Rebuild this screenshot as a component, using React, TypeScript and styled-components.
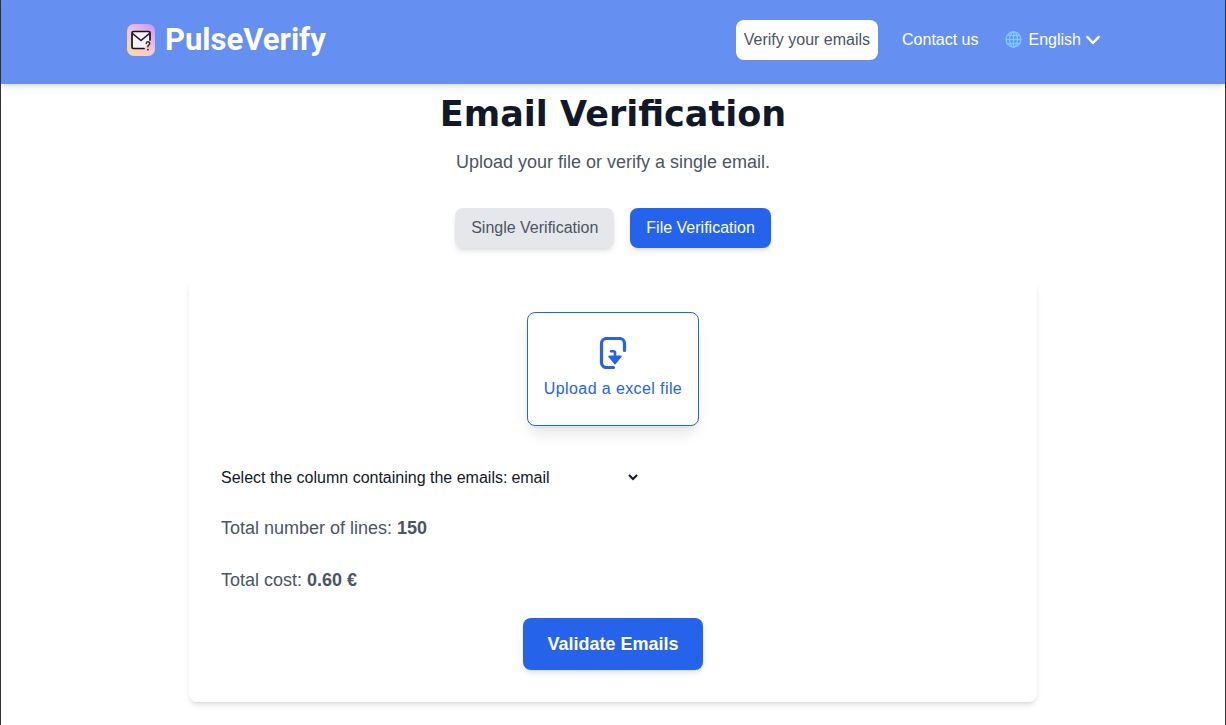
import React, { useState } from "react";
import styled, { createGlobalStyle } from "styled-components";

const GlobalStyle = createGlobalStyle`
  *, *::before, *::after { box-sizing: border-box; }
  body {
    margin: 0;
    background: #ffffff;
    color: #111827;
    font-family: "Liberation Sans", Arial, sans-serif;
    font-size: 16px;
    line-height: 24px;
  }
  h1, p { margin: 0; }
  button, select, input { font: inherit; }
`;

const Page = styled.div`
  min-height: 100vh;
  border: solid #333333;
  border-width: 0 1px;
`;

const Header = styled.header`
  background: #6590f1;
  box-shadow: 0 4px 6px -1px rgba(0, 0, 0, 0.1), 0 2px 4px -2px rgba(0, 0, 0, 0.1);
`;

const HeaderInner = styled.div`
  display: flex;
  align-items: center;
  justify-content: space-between;
  max-width: 1024px;
  margin: 0 auto;
  padding: 20px 24px 24px;
`;

const Brand = styled.a`
  display: flex;
  align-items: center;
  gap: 8px;
  color: #ffffff;
  font-family: Roboto, sans-serif;
  font-size: 31px;
  font-weight: 700;
  line-height: 36px;
  text-decoration: none;
`;

const Nav = styled.nav`
  display: flex;
  align-items: center;
  gap: 16px;
`;

const NavLink = styled.a<{ $active?: boolean }>`
  padding: 8px;
  border-radius: 8px;
  background: ${(p) => (p.$active ? "#ffffff" : "transparent")};
  color: ${(p) => (p.$active ? "#4b5563" : "#ffffff")};
  text-decoration: none;
`;

const Language = styled.label`
  display: flex;
  align-items: center;
  gap: 4px;
  color: #ffffff;
`;

const LanguageSelect = styled.select`
  appearance: none;
  field-sizing: content;
  padding: 0;
  border: 0;
  background: transparent;
  color: inherit;
  line-height: 24px;

  option { color: #111827; }
`;

const Main = styled.main`
  display: flex;
  flex-direction: column;
  max-width: 896px;
  margin: 0 auto;
  padding: 8px 24px 22px;
`;

const Title = styled.h1`
  font-family: "Arial Black", "DejaVu Sans", sans-serif;
  font-size: 35px;
  font-weight: 900;
  line-height: 44px;
  text-align: center;
`;

const Subtitle = styled.p`
  margin-top: 12px;
  color: #4b5563;
  font-size: 18px;
  line-height: 28px;
  text-align: center;
`;

const Tabs = styled.div`
  display: flex;
  justify-content: center;
  gap: 16px;
  margin: 32px 0;
`;

const Tab = styled.button<{ $active: boolean }>`
  padding: 8px 16px;
  border: 0;
  border-radius: 8px;
  background: ${(p) => (p.$active ? "#2563eb" : "#e5e7eb")};
  color: ${(p) => (p.$active ? "#ffffff" : "#4b5563")};
  line-height: 24px;
  box-shadow: 0 4px 6px -1px rgba(0, 0, 0, 0.1), 0 2px 4px -2px rgba(0, 0, 0, 0.1);
  cursor: pointer;
`;

const Card = styled.section`
  display: flex;
  flex-direction: column;
  align-items: flex-start;
  gap: 24px;
  padding: 32px;
  border-radius: 8px;
  background: #ffffff;
  box-shadow: 0 4px 6px -1px rgba(0, 0, 0, 0.1), 0 2px 4px -2px rgba(0, 0, 0, 0.1);
`;

const Upload = styled.label`
  display: flex;
  flex-direction: column;
  align-items: center;
  align-self: center;
  gap: 8px;
  margin-bottom: 16px;
  padding: 24px 16px;
  border: 1px solid #2563eb;
  border-radius: 8px;
  background: #ffffff;
  color: #2563eb;
  letter-spacing: 0.025em;
  box-shadow: 0 10px 15px -3px rgba(0, 0, 0, 0.1), 0 4px 6px -4px rgba(0, 0, 0, 0.1);
  cursor: pointer;
`;

const FileInput = styled.input`
  display: none;
`;

const ColumnField = styled.div`
  display: flex;
  align-items: flex-start;
`;

const ColumnSelect = styled.select`
  width: 134px;
  height: 22px;
  padding: 0;
  border: 0;
  background: #ffffff;
  color: #111827;
`;

const Summary = styled.p`
  color: #4b5563;
  font-size: 18px;
  line-height: 28px;
`;

const SubmitButton = styled.button`
  align-self: center;
  padding: 12px 24px;
  border: 0;
  border-radius: 8px;
  background: #2563eb;
  color: #ffffff;
  font-size: 18px;
  font-weight: 700;
  line-height: 28px;
  box-shadow: 0 4px 6px -1px rgba(0, 0, 0, 0.1), 0 2px 4px -2px rgba(0, 0, 0, 0.1);
  cursor: pointer;
`;

const LogoIcon = () => (
  <svg width="32" height="32" viewBox="0 0 32 32" fill="none" aria-hidden="true">
    <defs>
      <linearGradient id="logo-fill" x1="4" y1="31" x2="28" y2="2" gradientUnits="userSpaceOnUse">
        <stop offset="0" stopColor="#fbdc9c" />
        <stop offset="0.5" stopColor="#f3c6d6" />
        <stop offset="1" stopColor="#cf9bfb" />
      </linearGradient>
    </defs>
    <rect x="2" y="0" width="28" height="32" rx="7" fill="url(#logo-fill)" />
    <path d="M8 8h16v9l-4 7H8Z" fill="#f6f1f8" />
    <path d="M19 24.500H8.500A1.500 1.500 0 0 1 7 23V9a1.500 1.500 0 0 1 1.500-1.500h15A1.500 1.500 0 0 1 25 9v7" stroke="#15131c" strokeWidth="1.700" strokeLinecap="round" />
    <path d="m7.500 9.500 8.500 7 8.500-7" stroke="#15131c" strokeWidth="1.600" strokeLinejoin="round" />
    <path d="M21.200 19.500c.2-2.300 3.600-2.200 3.500 0 0 1.500-1.800 1.500-1.800 3.200" stroke="#3a2530" strokeWidth="1.400" strokeLinecap="round" />
    <circle cx="22.900" cy="25.600" r="0.900" fill="#3a2530" />
  </svg>
);

const GlobeIcon = () => (
  <svg width="22" height="20" viewBox="0 0 22 20" fill="none" stroke="#7cc9ff" strokeWidth="1.300" aria-hidden="true">
    <circle cx="10.500" cy="9.500" r="7.500" />
    <ellipse cx="10.500" cy="9.500" rx="4" ry="7.500" />
    <path d="M10.500 2v15M3 9.500h15M4.500 5.500h12M4.500 13.500h12" />
  </svg>
);

const ChevronIcon = () => (
  <svg width="16" height="16" viewBox="0 0 16 16" fill="none" stroke="currentColor" strokeWidth="2.500" strokeLinecap="round" strokeLinejoin="round" aria-hidden="true">
    <path d="m2.300 5 5.700 6 5.700-6" />
  </svg>
);

const UploadIcon = () => (
  <svg width="32" height="32" viewBox="0 0 32 32" fill="none" stroke="#2563eb" aria-hidden="true">
    <path d="M27.500 13.500V6.500a5 5 0 0 0-5-5H9.500a5 5 0 0 0-5 5v19a5 5 0 0 0 5 5h7" strokeWidth="3.200" strokeLinecap="round" />
    <path d="M14 14.200h2.500a1.500 1.500 0 0 1 1.500 1.500V21" strokeWidth="2.600" strokeLinecap="round" />
    <path d="M12.200 19.500h11.600L18 26.500Z" fill="#2563eb" strokeWidth="1.800" strokeLinejoin="round" />
  </svg>
);

export default function App() {
  const [mode, setMode] = useState<"single" | "file">("file");

  return (
    <>
      <GlobalStyle />
      <Page>
        <Header>
          <HeaderInner>
            <Brand href="#">
              <LogoIcon />
              PulseVerify
            </Brand>
            <Nav>
              <NavLink href="#verify" $active>Verify your emails</NavLink>
              <NavLink href="#contact">Contact us</NavLink>
              <Language>
                <GlobeIcon />
                <LanguageSelect aria-label="Language">
                  <option>English</option>
                </LanguageSelect>
                <ChevronIcon />
              </Language>
            </Nav>
          </HeaderInner>
        </Header>
        <Main>
          <Title>Email Verification</Title>
          <Subtitle>Upload your file or verify a single email.</Subtitle>
          <Tabs>
            <Tab type="button" $active={mode === "single"} onClick={() => setMode("single")}>
              Single Verification
            </Tab>
            <Tab type="button" $active={mode === "file"} onClick={() => setMode("file")}>
              File Verification
            </Tab>
          </Tabs>
          <Card>
            <Upload>
              <UploadIcon />
              <span>Upload a excel file</span>
              <FileInput type="file" accept=".xls,.xlsx" />
            </Upload>
            <ColumnField>
              <label htmlFor="email-column">Select the column containing the emails:</label>
              <ColumnSelect id="email-column">
                <option>email</option>
              </ColumnSelect>
            </ColumnField>
            <Summary>
              Total number of lines: <strong>150</strong>
            </Summary>
            <Summary>
              Total cost: <strong>0.60 €</strong>
            </Summary>
            <SubmitButton type="button">Validate Emails</SubmitButton>
          </Card>
        </Main>
      </Page>
    </>
  );
}
